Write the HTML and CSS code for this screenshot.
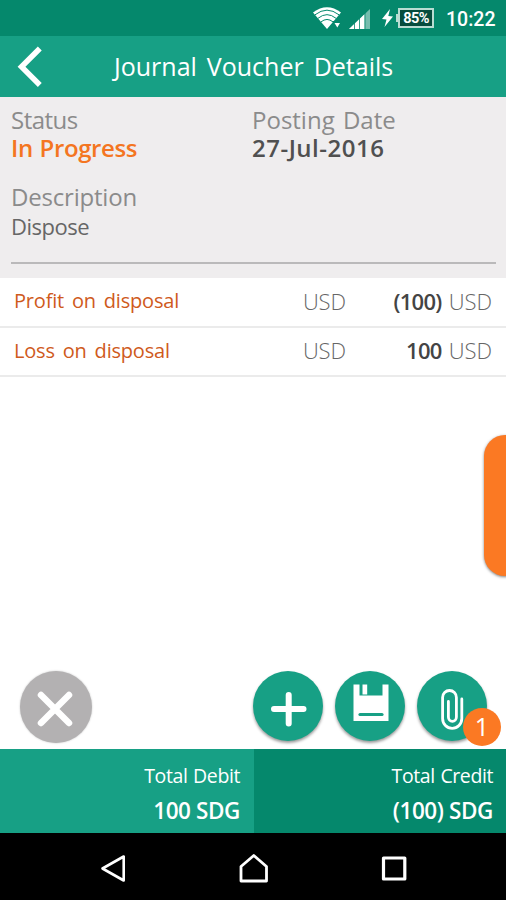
FILE: index.html
```html
<!DOCTYPE html>
<html lang="en">
<head>
    <meta charset="UTF-8">
    <meta name="viewport" content="width=device-width, initial-scale=1.0">
    <title>Journal Voucher Details</title>
    <link rel="stylesheet" href="styles.css">
</head>
<body>
    <div class="screen">
        <div class="status-bar">
            <svg class="wifi" width="28" height="24" viewBox="0 0 28 24">
                <path d="M0 6.500 Q14 -4 28 6.500 L14 23 Z" fill="#fff"/>
                <g fill="none" stroke="#05886c" stroke-width="1">
                    <path d="M2 8.800 Q14 -0.500 26 8.800"/>
                    <path d="M5 12.300 Q14 5 23 12.300"/>
                    <path d="M8 15.900 Q14 11 20 15.900"/>
                </g>
                <path d="M20 15 h8 v6 l-4 3 l-4 -3 Z" fill="#05886c"/>
                <path d="M21.500 17 h5.500 l-2.700 4.500 Z" fill="#fff"/>
            </svg>
            <svg class="signal" width="22" height="22" viewBox="0 0 22 22">
                <path d="M0 21 L21 1 V21 Z" fill="#fff" fill-opacity=".45"/>
                <path d="M0 21 L15.500 6.200 V21 Z" fill="#fff"/>
                <path d="M5.500 10 V21 M10.500 6 V21 M16 2 V21" stroke="#05886c" stroke-width=".8"/>
            </svg>
            <svg class="bolt" width="11" height="18" viewBox="0 0 11 18">
                <path d="M8 0 L0 10 L4.500 10.500 L2.500 18 L11 7.500 L6.300 7 Z" fill="#fff"/>
            </svg>
            <div class="battery">85%</div>
            <div class="time">10:22</div>
        </div>

        <div class="app-bar">
            <svg class="back" width="26" height="42" viewBox="0 0 26 42">
                <path d="M22.800 2.500 L4.500 20.800 L22.800 39" fill="none" stroke="#fff" stroke-width="5.500"/>
            </svg>
            <h1>Journal Voucher Details</h1>
        </div>

        <div class="details">
            <div class="detail-row">
                <div class="field">
                    <div class="label label-status">Status</div>
                    <div class="value value-status">In Progress</div>
                </div>
                <div class="field">
                    <div class="label label-date">Posting Date</div>
                    <div class="value value-date">27-Jul-2016</div>
                </div>
            </div>
            <div class="description">
                <div class="label label-desc">Description</div>
                <div class="desc-text">Dispose</div>
            </div>
        </div>

        <div class="entries">
            <div class="entry">
                <span class="account">Profit on disposal</span>
                <span class="currency">USD</span>
                <span class="amount"><b>(100)</b><span class="unit">USD</span></span>
            </div>
            <div class="entry">
                <span class="account">Loss on disposal</span>
                <span class="currency">USD</span>
                <span class="amount"><b>100</b><span class="unit">USD</span></span>
            </div>
        </div>

        <div class="drawer-handle"></div>

        <div class="actions">
            <button class="btn btn-cancel">
                <svg width="72" height="72" viewBox="0 0 72 72">
                    <path d="M21 24 L49 52 M49 24 L21 52" stroke="#fff" stroke-width="6.500" stroke-linecap="round"/>
                </svg>
            </button>
            <button class="btn">
                <svg width="70" height="70" viewBox="0 0 70 70">
                    <path d="M21 38 H50.500 M35.700 24 V52.500" stroke="#fff" stroke-width="6" stroke-linecap="round"/>
                </svg>
            </button>
            <button class="btn">
                <svg width="70" height="70" viewBox="0 0 70 70">
                    <path d="M18.500 13.500 H24.500 V24.500 H47.500 V13.500 H53.500 V50 H18.500 Z" fill="#fff"/>
                    <path d="M27.500 13.500 H32.200 V23.500 H27.500 Z" fill="#fff"/>
                    <path d="M25 43.500 H47" stroke="#17a085" stroke-width="3.200" stroke-linecap="round"/>
                </svg>
            </button>
            <button class="btn">
                <svg width="70" height="70" viewBox="0 0 70 70">
                    <path d="M44.800 28 V47.500 A9.600 9.800 0 0 1 25.600 47.500 V26.500 A6.900 7 0 0 1 39.400 26.500 V46 A4 4.300 0 0 1 31.400 46 V30.500" fill="none" stroke="#fff" stroke-width="2.800" stroke-linecap="round"/>
                </svg>
                <span class="badge">1</span>
            </button>
        </div>

        <div class="totals">
            <div class="total debit">
                <div class="total-label">Total Debit</div>
                <div class="total-value">100 SDG</div>
            </div>
            <div class="total credit">
                <div class="total-label">Total Credit</div>
                <div class="total-value">(100) SDG</div>
            </div>
        </div>

        <div class="nav-bar">
            <svg width="26" height="30" viewBox="0 0 26 30">
                <path d="M23.700 3.500 V27.500 L2.500 15.500 Z" fill="none" stroke="#fff" stroke-width="2.600" stroke-linejoin="round"/>
            </svg>
            <svg width="30" height="30" viewBox="0 0 30 30">
                <path d="M2 28 V13.500 L14.800 2.500 L27.500 13.500 V28 Z" fill="none" stroke="#fff" stroke-width="2.800" stroke-linejoin="round"/>
            </svg>
            <svg width="26" height="30" viewBox="0 0 26 30">
                <path d="M2.500 5 H23.800 V26 H2.500 Z" fill="none" stroke="#fff" stroke-width="3.200" stroke-linejoin="round"/>
            </svg>
        </div>
    </div>
</body>
</html>
```

FILE: styles.css
```css
* {
    box-sizing: border-box;
    margin: 0;
    padding: 0;
}

body {
    font-family: "Open Sans", "Noto Sans", sans-serif;
    background: #fff;
}

.screen {
    position: relative;
    display: flex;
    flex-direction: column;
    width: 506px;
    height: 900px;
    overflow: hidden;
    white-space: nowrap;
}

.status-bar {
    display: flex;
    align-items: center;
    justify-content: flex-end;
    height: 36px;
    padding-right: 11px;
    background: #05886c;
    color: #fff;
}

.wifi {
    margin-right: 8px;
}

.signal {
    margin: 2px 11px 0 0;
}

.bolt {
    margin-right: 5px;
}

.battery {
    position: relative;
    width: 36px;
    height: 20px;
    margin-right: 12px;
    border: 2px solid #b9dcd2;
    background: #064c3d;
    font: 700 14.5px/17px Roboto, sans-serif;
    letter-spacing: -0.6px;
    text-align: center;
}

.battery::before {
    content: "";
    position: absolute;
    left: -4px;
    top: 4px;
    width: 3px;
    height: 8px;
    background: #b9dcd2;
}

.time {
    width: 49px;
    padding-top: 3px;
    font: 500 19.5px/36px Roboto, sans-serif;
    text-align: right;
}

.app-bar {
    display: flex;
    align-items: center;
    height: 61px;
    padding-left: 17px;
    background: #17a085;
    color: #fff;
}

h1 {
    margin-left: 71px;
    font-size: 25px;
    font-weight: 400;
    line-height: 61px;
    word-spacing: 3.5px;
}

.details {
    height: 181px;
    padding: 9px 10px 0 11px;
    background: #efedee;
}

.detail-row {
    display: grid;
    grid-template-columns: 241px 1fr;
}

.label {
    color: #8b8b8b;
    font-size: 24px;
    line-height: 28px;
}

.label-status {
    letter-spacing: -0.5px;
}

.label-date {
    word-spacing: 2px;
}

.label-desc {
    letter-spacing: -0.2px;
}

.value {
    font-size: 24px;
    font-weight: 600;
    line-height: 28px;
}

.value-status {
    color: #f47521;
    letter-spacing: -0.4px;
    word-spacing: 1px;
}

.value-date {
    color: #505050;
    letter-spacing: 0.5px;
}

.description {
    height: 102px;
    padding-top: 21px;
    border-bottom: 2px solid #bab9ba;
}

.desc-text {
    color: #666;
    font-size: 22px;
    letter-spacing: -0.5px;
    line-height: 30px;
}

.entry {
    display: flex;
    align-items: center;
    height: 50px;
    padding: 0 14px 3px;
    border-bottom: 2px solid #ebebeb;
    font-size: 22px;
}

.entry:last-child {
    height: 49px;
}

.account {
    width: 289px;
    color: #cf5a1c;
    font-size: 20px;
    letter-spacing: -0.2px;
    word-spacing: 3px;
}

.currency,
.unit {
    color: #666;
    font-weight: 300;
}

.currency {
    letter-spacing: -0.2px;
}

.amount {
    flex: 1;
    text-align: right;
}

.amount b {
    margin-right: 7px;
    color: #444;
    font-weight: 600;
    letter-spacing: -0.7px;
}

/* side drawer tab, runs off the right edge */
.drawer-handle {
    position: absolute;
    right: -20px;
    top: 435px;
    width: 42px;
    height: 141px;
    border-radius: 22px;
    background: #fb7923;
    box-shadow: 0 1px 3px rgba(0, 0, 0, 0.5);
}

.actions {
    display: flex;
    align-items: flex-start;
    gap: 12px;
    margin-top: auto;
    padding: 0 19px 6px 20px;
}

.btn {
    position: relative;
    width: 70px;
    height: 70px;
    border: none;
    border-radius: 50%;
    background: #17a085;
    box-shadow: 0 2px 3px rgba(0, 0, 0, 0.4);
}

.btn svg {
    display: block;
}

.btn-cancel {
    width: 72px;
    height: 72px;
    margin-right: auto;
    background: #b3b1b2;
    box-shadow: 0 0 2px rgba(0, 0, 0, 0.25);
}

.badge {
    position: absolute;
    left: 46px;
    top: 37px;
    width: 38px;
    height: 38px;
    border-radius: 50%;
    background: #fb7923;
    color: #fff;
    font: 400 25px/36px "Open Sans", sans-serif;
    text-align: center;
}

.totals {
    display: grid;
    grid-template-columns: 254px 1fr;
    height: 84px;
    color: #fff;
    text-align: right;
}

.total {
    padding: 11px 13px 0 0;
}

.debit {
    padding-right: 14px;
    background: #17a085;
}

.credit {
    background: #05886c;
}

.total-label {
    font-size: 19.5px;
    letter-spacing: -0.4px;
    line-height: 32px;
    word-spacing: 1px;
}

.total-value {
    font-size: 22.5px;
    font-weight: 600;
    letter-spacing: -0.4px;
    line-height: 38px;
}

.nav-bar {
    display: flex;
    align-items: center;
    justify-content: space-between;
    height: 67px;
    padding: 3px 99px 0 100px;
    background: #000;
}
```
